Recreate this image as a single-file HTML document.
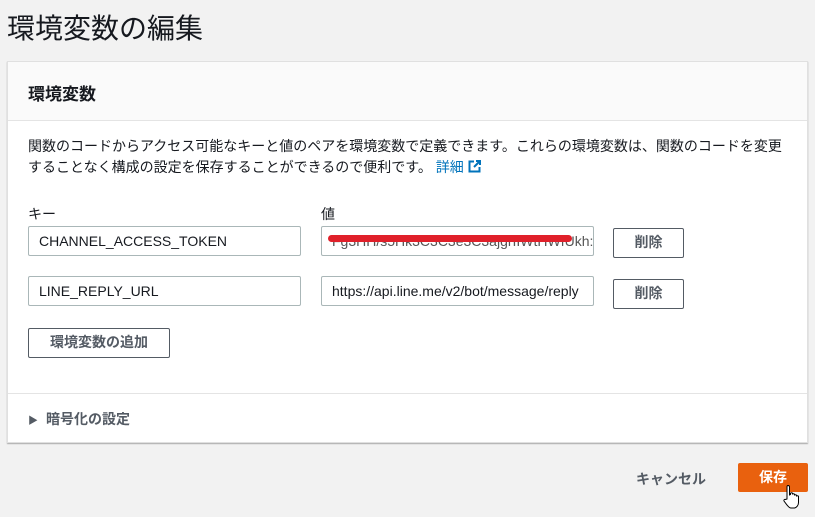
<!DOCTYPE html>
<html><head><meta charset="utf-8"><style>
*{box-sizing:border-box;margin:0;padding:0}
body{width:815px;height:517px;background:#f2f2f2;font-family:"Liberation Sans","Noto Sans CJK JP",sans-serif;color:#16191f;position:relative;overflow:hidden}
.a{position:absolute;white-space:nowrap}
h1{position:absolute;left:7px;top:7px;font-size:28px;font-weight:normal;color:#16191f}
.card{position:absolute;left:7px;top:61px;width:801px;height:382px;background:#fff;border:1px solid #e0e0e0;box-shadow:0 1px 1px rgba(0,0,0,.3)}
.hd{position:absolute;left:0;top:0;width:100%;height:59px;background:#fafafa;border-bottom:1px solid #e4e4e4}
.inp{position:absolute;height:30px;border:1px solid #aab7b8;border-radius:2px;font-size:14px;padding:6px 10px;color:#16191f;background:#fff;overflow:hidden;white-space:nowrap}
.btn{position:absolute;border:1px solid #545b64;border-radius:2px;background:#fff;font-size:14px;font-weight:bold;color:#545b64;text-align:center;line-height:27px}
</style></head><body>
<h1>環境変数の編集</h1>
<div class="card">
 <div class="hd"><div class="a" style="left:20px;top:18px;font-size:17px;font-weight:bold">環境変数</div></div>
 <div class="a" style="left:20px;top:74px;font-size:14px;line-height:21px;color:#16191f">関数のコードからアクセス可能なキーと値のペアを環境変数で定義できます。これらの環境変数は、関数のコードを変更<br>することなく構成の設定を保存することができるので便利です。 <span style="color:#0073bb">詳細 <svg width="13" height="13" viewBox="0 0 13 13" style="vertical-align:-1px"><path d="M6 1.5H1.5v10h10V7" fill="none" stroke="#0073bb" stroke-width="2"/><path d="M8 1h4v4M12 1L6 7" fill="none" stroke="#0073bb" stroke-width="2"/></svg></span></div>
 <div class="a" style="left:20px;top:142px;font-size:14px">キー</div>
 <div class="a" style="left:313px;top:142px;font-size:14px">値</div>
 <div class="inp" style="left:20px;top:164px;width:273px">CHANNEL_ACCESS_TOKEN</div>
 <div class="inp" style="left:313px;top:164px;width:273px;color:#555">Fg3HH/s5Hk3C3C3e3C3ajgrIIWtHWfUkh:<div style="position:absolute;left:6px;top:8px;width:244px;height:7px;background:#e0202a;border-radius:4px"></div></div>
 <div class="btn" style="left:605px;top:166px;width:71px;height:30px">削除</div>
 <div class="inp" style="left:20px;top:214px;width:273px">LINE_REPLY_URL</div>
 <div class="inp" style="left:313px;top:214px;width:273px">https://api.line.me/v2/bot/message/reply</div>
 <div class="btn" style="left:605px;top:217px;width:71px;height:30px">削除</div>
 <div class="btn" style="left:20px;top:266px;width:142px;height:30px">環境変数の追加</div>
 <div style="position:absolute;left:0;top:331px;width:100%;height:1px;background:#e4e4e4"></div>
 <div class="a" style="left:20px;top:347px;font-size:14px;font-weight:bold;color:#545b64"><span style="font-size:10px;margin-right:8px">▶</span>暗号化の設定</div>
</div>
<div class="a" style="left:636px;top:469px;font-size:14px;font-weight:bold;color:#545b64">キャンセル</div>
<div class="a" style="left:738px;top:463px;width:70px;height:29px;background:#e9610e;border-radius:2px;color:#fff;font-size:14px;font-weight:bold;text-align:center;line-height:29px">保存</div>
<svg class="a" style="left:783px;top:484px" width="20" height="26" viewBox="0 0 20 26"><path d="M5 1.5c1 0 1.5.6 1.5 1.5v8l1-.5v-1c0-1 2-1 2 0v1c0-1 2-1 2 0v1c0-1 2-1 2 0v1c0-1 2-1 2 0v6c0 3-2 5-4 5.5H8c-2 0-3-2-4-3l-3-4c-.5-1 .5-2 1.5-1.5L4 15V3c0-.9.4-1.5 1-1.5z" fill="#fff" stroke="#000" stroke-width="1"/></svg>
</body></html>
